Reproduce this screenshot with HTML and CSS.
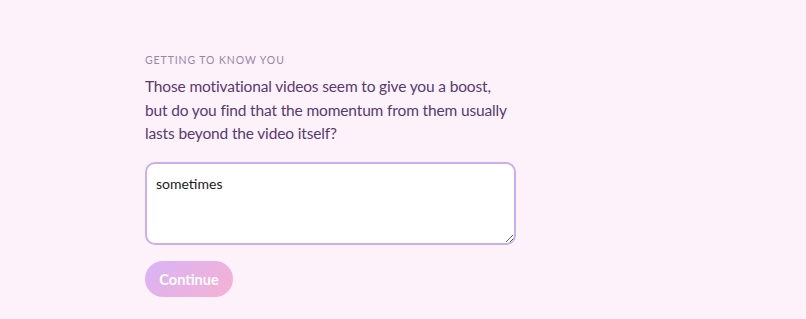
FILE: index.html
```html
<!DOCTYPE html>
<html lang="en">
<head>
  <meta charset="UTF-8">
  <title>Getting to know you</title>
  <link rel="stylesheet" href="styles.css">
</head>
<body>
  <div class="container">
    <div class="eyebrow">Getting to know you</div>
    <p class="question">Those motivational videos seem to give you a boost, but do you find that the momentum from them usually lasts beyond the video itself?</p>
    <textarea class="answer" autofocus>sometimes</textarea>
    <button class="continue">Continue</button>
  </div>
</body>
</html>
```

FILE: styles.css
```css
body {
  margin: 0;
  background: #fdf2fa;
  font-family: Lato, "Noto Sans", sans-serif;
}
.container {
  padding: 54px 0 0 145px;
  width: 371px;
}
.eyebrow {
  font-size: 10.5px;
  letter-spacing: 0.9px;
  text-transform: uppercase;
  color: #9b85a8;
  margin-bottom: 9px;
}
.question {
  margin: 0 0 16px;
  width: 364px;
  font-size: 15.5px;
  letter-spacing: -0.15px;
  line-height: 23.7px;
  color: #573a6e;
}
.answer {
  display: block;
  box-sizing: border-box;
  width: 371px;
  height: 83px;
  border: 2px solid #c8b0ef;
  border-radius: 10px;
  background: #fff;
  padding: 11px 9px;
  font-family: inherit;
  font-size: 14px;
  color: #1a1a1a;
  outline: none;
  resize: vertical;
}
.continue {
  margin-top: 16px;
  width: 88px;
  height: 36px;
  border: none;
  border-radius: 18px;
  background: linear-gradient(135deg, #d9b3f7, #f6b1d3);
  color: #fff;
  font-family: inherit;
  font-weight: 700;
  font-size: 14.5px;
  cursor: pointer;
}
```
